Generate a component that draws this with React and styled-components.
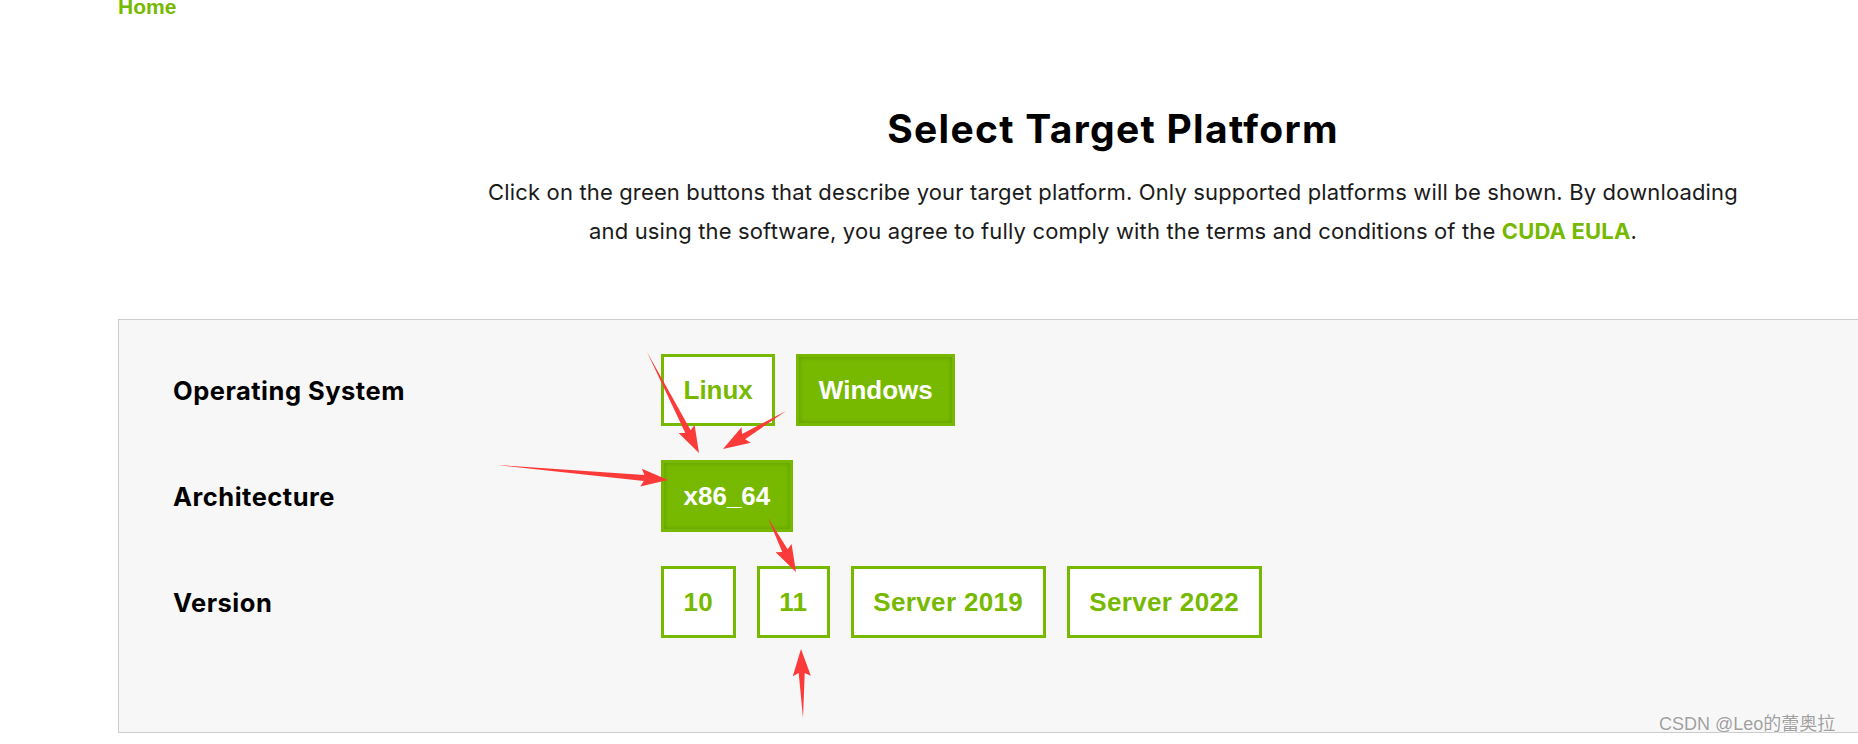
import React from "react";
import styled, { createGlobalStyle } from "styled-components";

const GREEN = "#76b900";

const GlobalStyle = createGlobalStyle`
  html, body { margin: 0; padding: 0; background: #ffffff; overflow: hidden; }
  body { font-family: Inter, "Noto Sans", sans-serif; color: #000; }
  * { box-sizing: border-box; }
`;

const Page = styled.div`
  position: relative;
  width: 2108px;
  height: 744px;
  padding-left: 118px;
`;

const Breadcrumb = styled.a`
  display: block;
  height: 14px;
  line-height: 14px;
  font-family: "Liberation Sans", Arial, sans-serif;
  font-weight: 700;
  font-size: 21px;
  color: ${GREEN};
  text-decoration: none;
`;

const Intro = styled.section`
  display: flex;
  flex-direction: column;
  align-items: center;
  text-align: center;
`;

const Title = styled.h1`
  margin: 92px 0 0;
  font-size: 39px;
  line-height: 46px;
  font-weight: 700;
  letter-spacing: 1.3px;
  color: #000;
`;

const Lead = styled.p`
  margin: 21px 0 0;
  font-size: 22px;
  line-height: 39px;
  font-weight: 400;
  letter-spacing: 0.15px;
  color: #1a1a1a;
`;

const EulaLink = styled.a`
  color: ${GREEN};
  font-weight: 700;
  text-decoration: none;
`;

const Panel = styled.div`
  margin-top: 68px;
  background: #f7f7f7;
  border: 1px solid #cccccc;
  border-right: none;
  padding: 34px 0 94px 54px;
  display: grid;
  grid-template-columns: 488px auto;
  row-gap: 34px;
  align-items: center;
`;

const Label = styled.div`
  font-size: 25.5px;
  font-weight: 700;
  letter-spacing: 0.5px;
  color: #000;
`;

const Options = styled.div`
  display: flex;
  gap: 21px;
`;

const Option = styled.button`
  height: 72px;
  padding: 0 19.5px;
  border: 3px solid ${GREEN};
  background: ${(p) => (p.$active ? GREEN : "#ffffff")};
  box-shadow: ${(p) => (p.$active ? "inset 0 0 5px rgba(0,0,0,0.18)" : "none")};
  color: ${(p) => (p.$active ? "#ffffff" : GREEN)};
  font-family: "Liberation Sans", Arial, sans-serif;
  font-weight: 700;
  font-size: 26px;
  letter-spacing: ${(p) => (p.$wide ? 0.35 : 0)}px;
  display: flex;
  align-items: center;
  justify-content: center;
  cursor: pointer;
`;

const Overlay = styled.svg`
  position: absolute;
  left: 0;
  top: 0;
  pointer-events: none;
`;

const Watermark = styled.div`
  position: absolute;
  left: 1659px;
  top: 713px;
  font-family: "Liberation Sans", Arial, "Noto Sans CJK SC", sans-serif;
  font-size: 18px;
  line-height: 22px;
  color: #a0a0a0;
  text-shadow: 0 0 2px #fff, 0 0 2px #fff;
  white-space: nowrap;
`;

function arrowPoints([x1, y1], [x2, y2]) {
  const dx = x2 - x1;
  const dy = y2 - y1;
  const len = Math.hypot(dx, dy);
  const ux = dx / len;
  const uy = dy / len;
  const px = -uy;
  const py = ux;
  const headLen = Math.min(24, len * 0.4);
  const bx = x2 - ux * headLen;
  const by = y2 - uy * headLen;
  const shaft = 3;
  const wing = 9;
  const pts = [
    [x1, y1],
    [bx + px * shaft, by + py * shaft],
    [bx + px * wing - ux * 3, by + py * wing - uy * 3],
    [x2, y2],
    [bx - px * wing - ux * 3, by - py * wing - uy * 3],
    [bx - px * shaft, by - py * shaft],
  ];
  return pts.map((p) => p.map((v) => v.toFixed(1)).join(",")).join(" ");
}

const arrows = [
  [[647, 352], [699, 453]],
  [[786, 411], [723, 449]],
  [[497, 465], [668, 480]],
  [[768, 518], [796, 572]],
  [[803, 718], [801, 649]],
];

const rows = [
  { label: "Operating System", options: ["Linux", "Windows"], active: "Windows", wide: false },
  { label: "Architecture", options: ["x86_64"], active: "x86_64", wide: false },
  { label: "Version", options: ["10", "11", "Server 2019", "Server 2022"], active: null, wide: true },
];

export default function App() {
  return (
    <>
      <GlobalStyle />
      <Page>
        <Breadcrumb href="#">Home</Breadcrumb>
        <Intro>
          <Title>Select Target Platform</Title>
          <Lead>
            Click on the green buttons that describe your target platform. Only supported platforms will be shown. By downloading
            <br />
            and using the software, you agree to fully comply with the terms and conditions of the <EulaLink href="#">CUDA EULA</EulaLink>.
          </Lead>
        </Intro>
        <Panel>
          {rows.map((r) => (
            <React.Fragment key={r.label}>
              <Label>{r.label}</Label>
              <Options>
                {r.options.map((o) => (
                  <Option key={o} $active={o === r.active} $wide={r.wide}>
                    {o}
                  </Option>
                ))}
              </Options>
            </React.Fragment>
          ))}
        </Panel>
        <Overlay width="1858" height="744" viewBox="0 0 1858 744">
          {arrows.map((a, i) => (
            <polygon key={i} points={arrowPoints(a[0], a[1])} fill="#fb3a3a" />
          ))}
        </Overlay>
        <Watermark>CSDN @Leo的蕾奥拉</Watermark>
      </Page>
    </>
  );
}
